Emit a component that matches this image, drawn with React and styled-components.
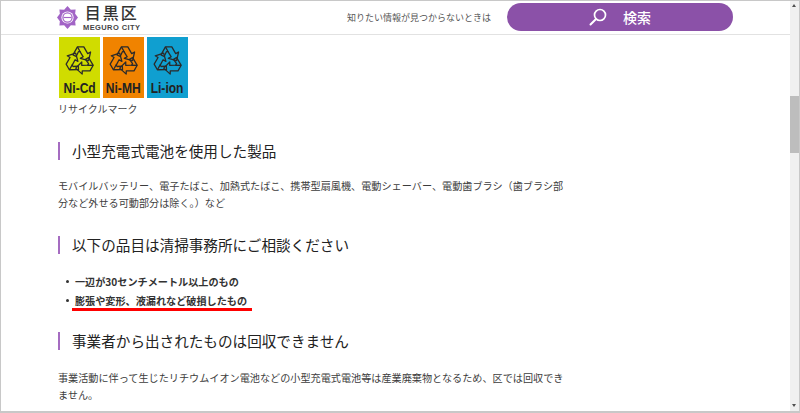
import React from 'react'
import styled, { createGlobalStyle } from 'styled-components'

const FONT = `"Noto Sans CJK JP", "Noto Sans", sans-serif`

const GlobalStyle = createGlobalStyle`
html, body { margin: 0; padding: 0; height: 100%; overflow: hidden; background: #fff; }
body { font-family: ${FONT}; color: #333; }
`

const marks = [
  { id: 1, label: 'Ni-Cd', color: '#d0dc00' },
  { id: 2, label: 'Ni-MH', color: '#f08300' },
  { id: 3, label: 'Li-ion', color: '#109fd0' },
]

const RecycleArrow = ({ angle }) => (
  <g transform={`rotate(${angle} 50 54)`}>
    <path d="M28 36 L42 11 L62 11 L74 32 L83 27 L77 54 L51 47 L60 42 L50 26 L45 26 L38 41 Z" />
    <path d="M42 11 L51 27" />
  </g>
)

const RecycleIcon = () => (
  <svg width="32" height="34" viewBox="0 0 100 104" fill="none" stroke="#2a2a2a" strokeWidth="4" strokeLinejoin="round">
    <RecycleArrow angle={0} />
    <RecycleArrow angle={120} />
    <RecycleArrow angle={240} />
  </svg>
)

const LogoMark = () => (
  <svg width="21" height="23" viewBox="0 0 22 24">
    <path
      d="M11 0 L14.5 4 L19.5 3.5 L19 8 L22 12 L19 16 L19.5 20.5 L14.5 20 L11 24 L7.5 20 L2.5 20.5 L3 16 L0 12 L3 8 L2.5 3.5 L7.5 4 Z"
      fill="#a264c6"
    />
    <circle cx="11" cy="12" r="6.4" fill="#fff" />
    <circle cx="11" cy="12" r="4.8" fill="none" stroke="#a264c6" strokeWidth="1.3" />
    <path d="M7 12 H15" stroke="#a264c6" strokeWidth="1.2" />
  </svg>
)

const SearchIcon = () => (
  <svg width="18" height="18" viewBox="0 0 18 18" fill="none" stroke="#fff" strokeLinecap="round">
    <circle cx="11" cy="7" r="5.5" strokeWidth="1.7" />
    <path d="M6.8 11.2 L1.5 16.5" strokeWidth="2" />
  </svg>
)

const App = () => {
  return (
    <>
      <GlobalStyle />
      <Frame>
        <Page>
          <Header>
            <Logo>
              <LogoMark />
              <LogoText>
                <LogoName>目黒区</LogoName>
                <LogoSub>MEGURO CITY</LogoSub>
              </LogoText>
            </Logo>
            <SearchArea>
              <SearchHint>知りたい情報が見つからないときは</SearchHint>
              <SearchButton>
                <SearchIcon />
                <span>検索</span>
              </SearchButton>
            </SearchArea>
          </Header>
          <Main>
            <Marks>
              {marks.map((item) => (
                <Mark key={item.id} $color={item.color}>
                  <RecycleIcon />
                  <MarkLabel>{item.label}</MarkLabel>
                </Mark>
              ))}
            </Marks>
            <Caption>リサイクルマーク</Caption>
            <Heading $gap="25px">小型充電式電池を使用した製品</Heading>
            <Body $gap="17px">
              モバイルバッテリー、電子たばこ、加熱式たばこ、携帯型扇風機、電動シェーバー、電動歯ブラシ（歯ブラシ部分など外せる可動部分は除く。）など
            </Body>
            <Heading $gap="25px">以下の品目は清掃事務所にご相談ください</Heading>
            <List>
              <Item>一辺が30センチメートル以上のもの</Item>
              <Item $marked>膨張や変形、液漏れなど破損したもの</Item>
            </List>
            <Heading $gap="22px">事業者から出されたものは回収できません</Heading>
            <Body $gap="19px">
              事業活動に伴って生じたリチウムイオン電池などの小型充電式電池等は産業廃棄物となるため、区では回収できません。
            </Body>
          </Main>
        </Page>
        <Scrollbar>
          <Arrow />
          <Track>
            <Thumb />
          </Track>
          <Arrow $down />
        </Scrollbar>
      </Frame>
    </>
  )
}

const Frame = styled.div`
display: flex;
width: 800px;
height: 413px;
box-sizing: border-box;
border: 1px solid #c8c8c8;
border-width: 1px 1px 2px 1px;
overflow: hidden;
`

const Page = styled.div`
flex: 1;
min-width: 0;
overflow: hidden;
`

const Header = styled.header`
display: flex;
justify-content: space-between;
align-items: center;
height: 34px;
box-sizing: border-box;
border-bottom: 1px solid #e2e2e2;
padding: 0 57px 1px 56px;
`

const Logo = styled.div`
display: flex;
align-items: center;
gap: 5px;
`

const LogoText = styled.div`
display: flex;
flex-direction: column;
align-items: center;
`

const LogoName = styled.div`
font-size: 16px;
line-height: 18px;
letter-spacing: 2px;
color: #333;
font-weight: 500;
`

const LogoSub = styled.div`
margin-top: 3px;
font-family: "Liberation Sans", sans-serif;
font-size: 7.5px;
line-height: 8px;
letter-spacing: 0.4px;
font-weight: 700;
color: #444;
white-space: nowrap;
`

const SearchArea = styled.div`
display: flex;
align-items: center;
gap: 16px;
`

const SearchHint = styled.div`
font-size: 9px;
color: #555;
`

const SearchButton = styled.div`
display: flex;
justify-content: center;
align-items: center;
gap: 16px;
width: 226px;
height: 28px;
border-radius: 14px;
background: #8b51a8;
color: #fff;
font-size: 14px;
font-weight: 500;
`

const Main = styled.main`
width: 510px;
padding: 2px 0 0 57px;
`

const Marks = styled.div`
display: flex;
gap: 3px;
padding-left: 1px;
`

const Mark = styled.div`
display: flex;
flex-direction: column;
align-items: center;
justify-content: space-between;
width: 41px;
height: 61px;
box-sizing: border-box;
padding: 6px 0 3px;
background: ${(props) => props.$color};
`

const MarkLabel = styled.div`
font-family: "Liberation Sans", sans-serif;
font-size: 14px;
line-height: 14px;
font-weight: 700;
color: #222;
transform: scaleX(0.86);
white-space: nowrap;
`

const Caption = styled.div`
font-size: 10px;
line-height: 16px;
margin-top: 3px;
color: #444;
`

const Heading = styled.h2`
margin: ${(props) => props.$gap} 0 0;
padding-left: 12px;
border-left: 2px solid #a56cc1;
font-size: 14.6px;
line-height: 18px;
font-weight: 400;
color: #222;
`

const Body = styled.p`
margin: ${(props) => props.$gap} 0 0;
font-size: 10.14px;
line-height: 17px;
color: #3c3c3c;
`

const List = styled.ul`
list-style: none;
margin: 18px 0 0;
padding: 0 0 0 17px;
`

const Item = styled.li`
position: relative;
font-size: 10.15px;
line-height: 19px;
font-weight: 700;
color: #333;
${(props) => props.$marked && `
&::after {
  content: "";
  position: absolute;
  left: -3px;
  top: 17px;
  width: 180px;
  height: 3px;
  background: #f00;
}
`}
&::before {
  content: "";
  position: absolute;
  left: -9px;
  top: 8px;
  width: 3px;
  height: 3px;
  border-radius: 50%;
  background: #333;
}
`

const Scrollbar = styled.div`
display: flex;
flex-direction: column;
width: 9px;
background: #f0f0f0;
`

const Arrow = styled.div`
height: 10px;
flex-shrink: 0;
position: relative;
&::after {
  content: "";
  position: absolute;
  left: 2px;
  top: 3px;
  border-left: 2.5px solid transparent;
  border-right: 2.5px solid transparent;
  ${(props) => (props.$down ? 'border-top: 3px solid #505050;' : 'border-bottom: 3px solid #505050;')}
}
`

const Track = styled.div`
flex: 1;
padding-top: 85px;
`

const Thumb = styled.div`
height: 57px;
background: #bdbdbd;
`

export default App
